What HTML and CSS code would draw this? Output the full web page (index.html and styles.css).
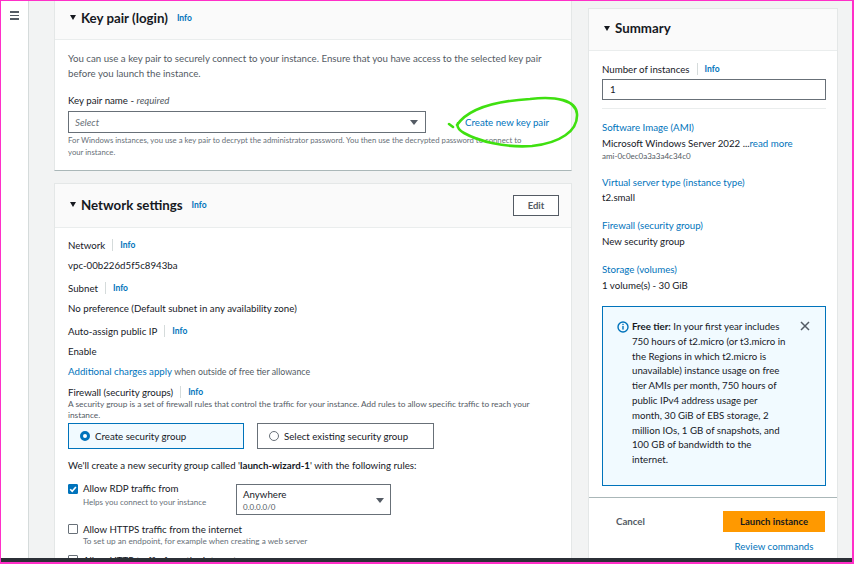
FILE: index.html
```html
<!DOCTYPE html>
<html lang="en">
<head>
<meta charset="utf-8">
<title>Launch an instance</title>
<link rel="stylesheet" href="styles.css">
</head>
<body>
<div class="screen">
  <div class="main">
    <aside class="sidebar">
      <span class="burger"><i></i><i></i><i></i></span>
    </aside>
    <div class="content">
      <div class="col-left">
        <section class="card card-key">
          <header class="card-head head-key">
            <span class="caret"></span><h2>Key pair (login)</h2><a class="info">Info</a>
          </header>
          <div class="card-body body-key">
            <p class="desc">You can use a key pair to securely connect to your instance. Ensure that you have access to the selected key pair<br>before you launch the instance.</p>
            <div class="kp-label">Key pair name - <em>required</em></div>
            <div class="kp-row">
              <div class="select kp-select"><span class="ph">Select</span><span class="sel-caret"></span></div>
              <a class="link kp-link">Create new key pair</a>
            </div>
            <p class="help">For Windows instances, you use a key pair to decrypt the administrator password. You then use the decrypted password to connect to<br>your instance.</p>
          </div>
        </section>

        <section class="card card-net">
          <header class="card-head head-net">
            <span class="caret"></span><h2>Network settings</h2><a class="info">Info</a>
            <button class="btn-edit">Edit</button>
          </header>
          <div class="card-body body-net">
            <div class="fl">Network<span class="sep"></span><a class="info">Info</a></div>
            <div class="fv">vpc-00b226d5f5c8943ba</div>
            <div class="fl gap">Subnet<span class="sep"></span><a class="info">Info</a></div>
            <div class="fv">No preference (Default subnet in any availability zone)</div>
            <div class="fl gap">Auto-assign public IP<span class="sep"></span><a class="info">Info</a></div>
            <div class="fv">Enable</div>
            <div class="fv"><a class="link">Additional charges apply</a> <span class="small-gray">when outside of free tier allowance</span></div>
            <div class="fl fw">Firewall (security groups)<span class="sep"></span><a class="info">Info</a></div>
            <p class="fw-desc">A security group is a set of firewall rules that control the traffic for your instance. Add rules to allow specific traffic to reach your<br>instance.</p>
            <div class="tiles">
              <div class="tile tile-on"><span class="radio radio-on"></span>Create security group</div>
              <div class="tile"><span class="radio"></span>Select existing security group</div>
            </div>
            <p class="sg-note">We'll create a new security group called '<b>launch-wizard-1</b>' with the following rules:</p>
            <div class="rule rule-rdp">
              <div class="chk-item">
                <span class="chk chk-on"><svg viewBox="0 0 10 10" width="10" height="10"><path d="M2.2 5.2 L4.2 7.2 L7.9 2.9" fill="none" stroke="#fff" stroke-width="1.6"/></svg></span>
                <div class="chk-text"><div class="chk-label">Allow RDP traffic from</div><div class="chk-help">Helps you connect to your instance</div></div>
              </div>
              <div class="select any-select">
                <div class="any-text"><div class="any-main">Anywhere</div><div class="any-sub">0.0.0.0/0</div></div>
                <span class="sel-caret"></span>
              </div>
            </div>
            <div class="rule rule-https">
              <div class="chk-item">
                <span class="chk"></span>
                <div class="chk-text"><div class="chk-label">Allow HTTPS traffic from the internet</div><div class="chk-help">To set up an endpoint, for example when creating a web server</div></div>
              </div>
            </div>
            <div class="rule rule-http">
              <div class="chk-item">
                <span class="chk"></span>
                <div class="chk-text"><div class="chk-label">Allow HTTP traffic from the internet</div></div>
              </div>
            </div>
          </div>
        </section>
      </div>

      <div class="col-right">
        <section class="card card-sum">
          <header class="card-head head-sum">
            <span class="caret"></span><h2>Summary</h2>
          </header>
          <div class="card-body body-sum">
            <div class="fl sum-fl">Number of instances<span class="sep"></span><a class="info">Info</a></div>
            <div class="input">1</div>
            <hr class="divider">
            <div class="s-label link">Software Image (AMI)</div>
            <div class="s-val">Microsoft Windows Server 2022 ...<a class="link">read more</a></div>
            <div class="s-id">ami-0c0ec0a3a3a4c34c0</div>
            <div class="s-label link s-gap">Virtual server type (instance type)</div>
            <div class="s-val s-val-t">t2.small</div>
            <div class="s-label link s-gap">Firewall (security group)</div>
            <div class="s-val">New security group</div>
            <div class="s-label link s-gap2">Storage (volumes)</div>
            <div class="s-val">1 volume(s) - 30 GiB</div>
            <div class="freetier">
              <svg class="ft-icon" viewBox="0 0 12 12" width="12" height="12"><circle cx="6" cy="6" r="5" fill="none" stroke="#0073bb" stroke-width="1.4"/><rect x="5.3" y="5" width="1.4" height="3.6" fill="#0073bb"/><rect x="5.3" y="2.8" width="1.4" height="1.3" fill="#0073bb"/></svg>
              <p class="ft-text"><b>Free tier:</b> In your first year includes<br>750 hours of t2.micro (or t3.micro in<br>the Regions in which t2.micro is<br>unavailable) instance usage on free<br>tier AMIs per month, 750 hours of<br>public IPv4 address usage per<br>month, 30 GiB of EBS storage, 2<br>million IOs, 1 GB of snapshots, and<br>100 GB of bandwidth to the<br>internet.</p>
              <svg class="ft-close" viewBox="0 0 10 10" width="10" height="10"><path d="M1 1 L9 9 M9 1 L1 9" stroke="#545b64" stroke-width="1.5" fill="none"/></svg>
            </div>
          </div>
          <footer class="sum-foot">
            <a class="btn-cancel">Cancel</a>
            <div class="launch-group">
              <button class="btn-launch">Launch instance</button>
              <a class="link review">Review commands</a>
            </div>
          </footer>
        </section>
      </div>
    </div>
  </div>
  <div class="taskbar"></div>
  <svg class="scribble" width="854" height="564" viewBox="0 0 854 564">
    <path d="M449 124 L453 127 M457 125 C468 109 495 101 530 99 C556 96 576 100 577 114 C578 131 560 143 532 146 C505 148 478 141 464 133 C459 130 456 127 458 123" fill="none" stroke="#3fe010" stroke-width="2.6" stroke-linecap="round"/>
  </svg>
</div>
</body>
</html>
```

FILE: styles.css
```css
* { box-sizing: border-box; margin: 0; padding: 0; }
html, body { width: 854px; height: 564px; overflow: hidden; }
body {
  font-family: Lato, "Open Sans", sans-serif;
  font-size: 9.7px;
  color: #16191f;
  background: #fff;
}
a { text-decoration: none; cursor: pointer; }
.screen {
  width: 854px; height: 564px;
  border: solid #ff2fc8;
  border-width: 1px 2px 2px 1px;
  display: flex; flex-direction: column;
  position: relative; overflow: hidden;
}
.main { flex: 1; display: flex; min-height: 0; overflow: hidden; }
.sidebar {
  width: 28px; flex: none; background: #fff;
  border-right: 1px solid #d5dbdb;
  padding: 10px 0 0 9px;
}
.burger { display: flex; flex-direction: column; gap: 2px; width: 9px; }
.burger i { display: block; height: 1.5px; background: #545b64; }
.content {
  flex: 1; display: flex; gap: 16px;
  background: #f2f3f3;
  padding: 0 14px 0 25px;
  min-height: 0; overflow: hidden;
}
.col-left { width: 518px; flex: none; display: flex; flex-direction: column; gap: 12px; }
.col-right { width: 250px; flex: none; padding-top: 7px; }

.card {
  background: #fff;
  border: 1px solid #e4e7e7;
  border-bottom-color: #aab7b8;
  flex: none;
}
.card-key { border-top: 0; }
.card-net { flex: 1; border-bottom: 0; }
.card-sum { height: 560px; border-bottom: 0; }

.card-head {
  background: #fafafa;
  border-bottom: 1px solid #eaeded;
  display: flex; align-items: center;
  padding-left: 15px;
}
.head-key { height: 39px; padding-bottom: 5px; }
.head-net { height: 44px; padding-bottom: 2px; }
.head-sum { height: 42px; padding-bottom: 3px; }
.caret {
  width: 0; height: 0;
  border-left: 3.5px solid transparent; border-right: 3.5px solid transparent;
  border-top: 5px solid #16191f;
  margin-right: 5px;
}
.card-head h2 { font-size: 13.3px; font-weight: 700; line-height: 18px; }
.info { color: #0073bb; font-weight: 700; font-size: 8.5px; }
.card-head .info { margin-left: 9px; }
.btn-edit {
  margin-left: auto; margin-right: 12px; margin-top: 2px;
  width: 46px; height: 21px;
  border: 1px solid #545b64; background: #fff;
  font-family: inherit; font-size: 9.5px; font-weight: 700; color: #545b64;
}

.card-body { padding-left: 13px; }
.body-key { padding-top: 11px; padding-bottom: 12px; }
.desc { color: #545b64; line-height: 15px; white-space: nowrap; }
.kp-label { margin-top: 11px; line-height: 16px; }
.kp-label em { color: #545b64; }
.kp-row { display: flex; align-items: center; margin-top: 3px; }
.select {
  border: 1px solid #687078; background: #fff;
  display: flex; align-items: center; justify-content: space-between;
}
.kp-select { width: 358px; height: 22px; padding: 0 7px 0 6px; }
.ph { font-style: italic; color: #687078; }
.sel-caret {
  width: 0; height: 0;
  border-left: 4px solid transparent; border-right: 4px solid transparent;
  border-top: 5px solid #545b64;
}
.link { color: #0073bb; }
.kp-link { margin-left: 39px; }
.help { margin-top: 1px; font-size: 7.75px; line-height: 12px; color: #687078; white-space: nowrap; }

.body-net { padding-top: 7px; }
.fl { display: flex; align-items: center; height: 20px; }
.fl.gap { margin-top: 3px; }
.sep { display: inline-block; width: 1px; height: 12px; background: #d5dbdb; margin: 0 7px 0 7px; }
.fv { line-height: 20px; }
.small-gray { font-size: 8.8px; color: #545b64; }
.fl.fw { height: 14px; margin-top: 3px; }
.fw-desc { font-size: 8.3px; line-height: 11px; color: #545b64; white-space: nowrap; }
.tiles { display: flex; gap: 13px; margin-top: 2px; }
.tile {
  height: 26px; border: 1px solid #687078;
  display: flex; align-items: center;
  padding-left: 11px; width: 177px;
}
.tile-on { width: 176px; border-color: #0073bb; background: #f1faff; }
.radio {
  width: 10px; height: 10px; border-radius: 50%;
  border: 1px solid #687078; background: #fff; margin-right: 5px; flex: none;
}
.radio-on { border: 3px solid #0073bb; }
.sg-note { margin-top: 8px; line-height: 16px; }
.rule { display: flex; margin-top: 7px; }
.chk-item { display: flex; width: 168px; flex: none; }
.rule-https .chk-item, .rule-http .chk-item { width: auto; }
.chk {
  width: 10px; height: 10px; flex: none;
  border: 1px solid #687078; border-radius: 1px; background: #fff;
  margin-top: 4px; margin-right: 5px;
}
.chk-on { background: #0073bb; border-color: #0073bb; }
.chk-on svg { display: block; margin: -1px; }
.chk-label { line-height: 16px; }
.chk-help { font-size: 8px; line-height: 12px; color: #687078; }
.rule-https .chk-label, .rule-http .chk-label { line-height: 14px; }
.rule-https .chk { margin-top: 2px; }
.rule-https .chk-help { line-height: 11px; font-size: 8.2px; }
.rule-http { margin-top: 6px; }
.rule-http .chk { margin-top: 2px; }
.any-select {
  width: 155px; height: 31px; margin-top: 4px;
  padding: 0 6px 0 6px; align-items: flex-start;
}
.any-text { padding-top: 3px; }
.any-main { line-height: 13px; }
.any-sub { font-size: 8px; line-height: 12px; color: #545b64; }
.any-select .sel-caret { margin-top: 13px; }

.body-sum { padding: 10px 11px 11px 13px; }
.sum-fl { height: 16px; }
.input {
  margin-top: 2px; height: 21px;
  border: 1px solid #687078;
  padding-left: 7px; line-height: 19px;
}
.divider { border: 0; border-top: 1px solid #eaeded; margin-top: 8px; }
.s-label { line-height: 16px; margin-top: 10px; }
.s-gap { margin-top: 13px; }
.s-gap2 { margin-top: 12px; }
.s-val { line-height: 16px; }
.s-val-t { line-height: 14px; }
.s-id { font-size: 8px; line-height: 10px; color: #545b64; }
.freetier {
  margin-top: 13px; height: 180px;
  border: 1px solid #0073bb; background: #f1faff;
  display: flex; align-items: flex-start;
  padding: 13px 15px 0 14px;
}
.ft-icon { flex: none; margin-top: 1px; margin-right: 3px; }
.ft-text { line-height: 14.8px; white-space: nowrap; margin-top: -1px; }
.ft-close { margin-left: auto; margin-top: 1px; flex: none; }
.sum-foot {
  border-top: 1px solid #aab7b8;
  display: flex; justify-content: space-between; align-items: flex-start;
  padding: 13px 12px 0 27px;
}
.btn-cancel { line-height: 21px; font-weight: 700; color: #545b64; }
.launch-group { display: flex; flex-direction: column; align-items: center; }
.btn-launch {
  width: 102px; height: 21px; border: 0;
  background: #ff9900; color: #16191f;
  font-family: inherit; font-size: 9.5px; font-weight: 700;
}
.review { margin-top: 7px; line-height: 14px; }
.taskbar { height: 4px; background: #2b2f36; flex: none; }
.scribble { position: absolute; left: -1px; top: -1px; pointer-events: none; }
```
